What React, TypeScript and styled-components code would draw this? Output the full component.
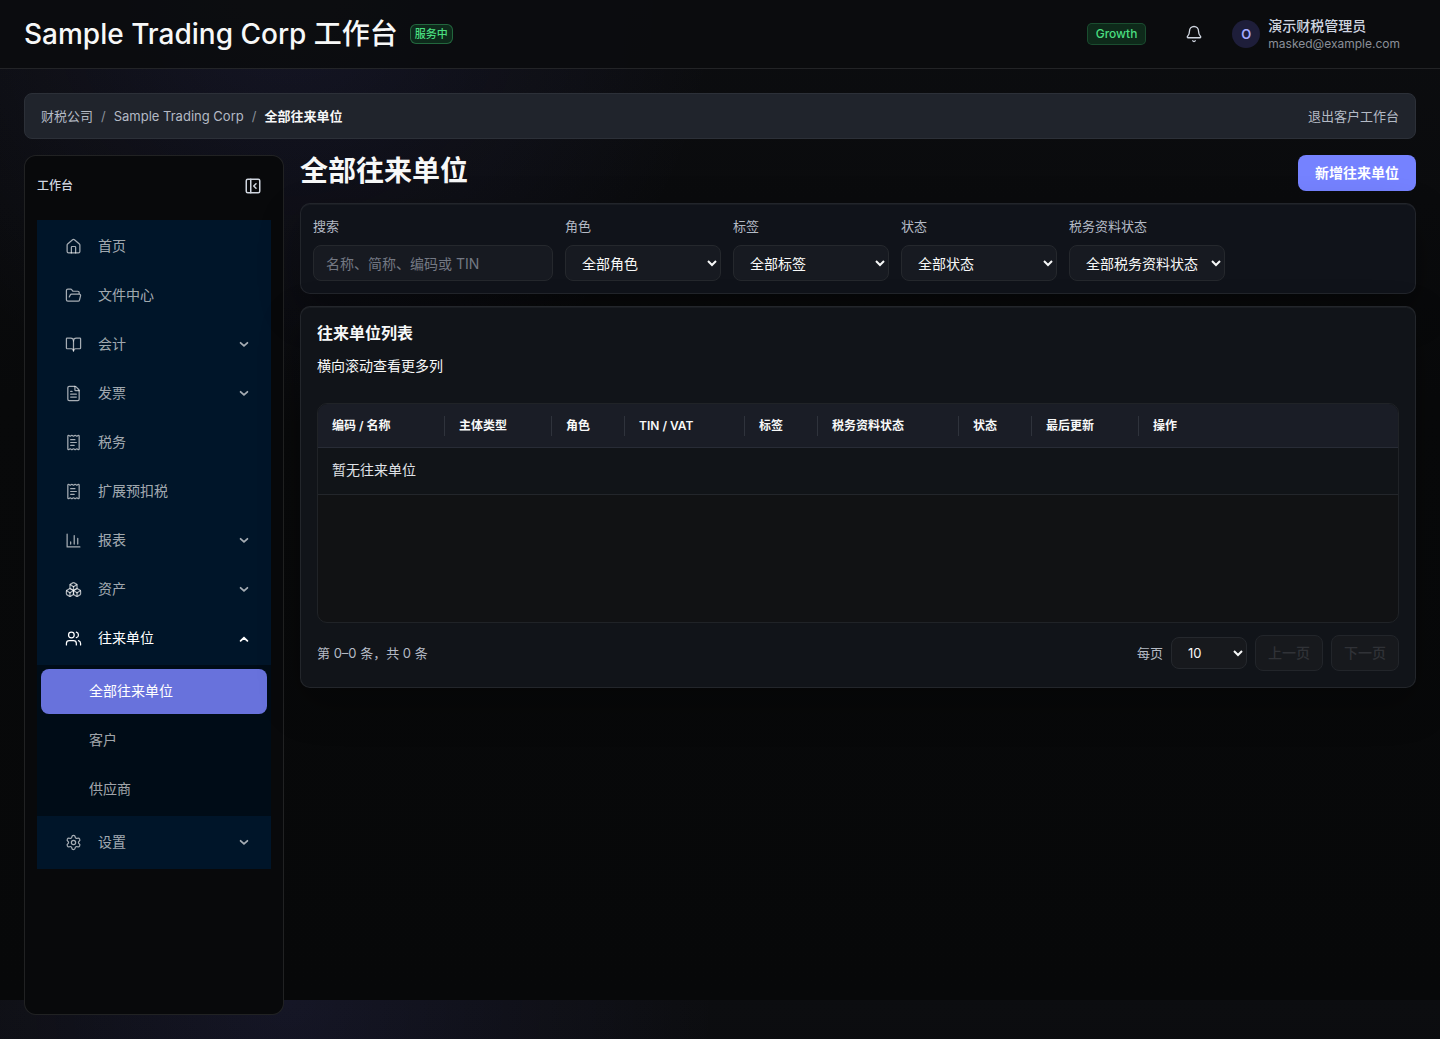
import React from "react";
import styled, { createGlobalStyle, css } from "styled-components";
import {
  Bell,
  BookOpen,
  Boxes,
  FileText,
  FolderOpen,
  House,
  PanelLeftClose,
  ReceiptText,
  Settings,
  Users,
} from "lucide-react";

const GlobalStyle = createGlobalStyle`
  *, *::before, *::after { box-sizing: border-box; }
  html { color-scheme: dark; }
  body {
    margin: 0;
    color: #f7f8f8;
    font: 400 14px/22px Inter, "Noto Sans CJK SC", sans-serif;
    background-color: #08090a;
    background-image:
      radial-gradient(circle at 20% 0%, rgba(113, 112, 255, 0.09), transparent 430px),
      linear-gradient(180deg, #0c0d10 0%, #08090a 40%, #070809 100%);
    background-size: 100% 1000px;
  }
  button, input, select { font: inherit; color: inherit; }
  h1, h2, p { margin: 0; }
  a { color: inherit; text-decoration: none; }
`;

const Shell = styled.div`
  display: flex;
  flex-direction: column;
  min-height: 100vh;
`;

const Header = styled.header`
  display: flex;
  align-items: center;
  justify-content: space-between;
  height: 69px;
  padding: 0 24px;
  background: rgba(11, 12, 14, 0.9);
  border-bottom: 1px solid rgba(255, 255, 255, 0.1);
`;

const Cluster = styled.div<{ $gap: number }>`
  display: flex;
  align-items: center;
  gap: ${(p) => p.$gap}px;
`;

const PageTitle = styled.h1<{ $strong?: boolean }>`
  font-size: 28px;
  line-height: 32px;
  font-weight: ${(p) => (p.$strong ? 600 : 500)};
`;

const Badge = styled.span<{ $large?: boolean }>`
  padding: ${(p) => (p.$large ? "0 8px" : "0 4px")};
  font-size: ${(p) => (p.$large ? 12 : 11)}px;
  line-height: ${(p) => (p.$large ? 20 : 18)}px;
  font-weight: 500;
  color: #4ade80;
  background: rgba(34, 197, 94, 0.16);
  border: 1px solid rgba(74, 222, 128, ${(p) => (p.$large ? 0.2 : 0.34)});
  border-radius: ${(p) => (p.$large ? 5 : 6)}px;
`;

const IconButton = styled.button`
  display: grid;
  place-items: center;
  width: 36px;
  height: 36px;
  padding: 0;
  color: #d0d6e0;
  background: none;
  border: 0;
`;

const UserButton = styled.button`
  display: flex;
  align-items: center;
  gap: 8px;
  margin-left: 4px;
  padding: 0 16px;
  text-align: left;
  background: none;
  border: 0;
`;

const Avatar = styled.span`
  display: grid;
  place-items: center;
  width: 28px;
  height: 28px;
  color: #a5abff;
  font-size: 13px;
  font-weight: 600;
  background: #1e1e3a;
  border-radius: 50%;
`;

const UserText = styled.span`
  display: grid;
`;

const UserName = styled.span`
  line-height: 20px;
  font-weight: 500;
  color: #d0d6e0;
`;

const UserMail = styled.span`
  font-size: 12px;
  line-height: 16px;
  color: #8a8f98;
`;

const Body = styled.div`
  display: flex;
  flex: 1;
  flex-direction: column;
  gap: 16px;
  padding: 24px;
`;

const TopBar = styled.div`
  display: flex;
  align-items: center;
  justify-content: space-between;
  height: 46px;
  padding: 0 16px;
  font-size: 13px;
  color: #b4bac5;
  background: #20242c;
  border: 1px solid #2c3038;
  border-radius: 8px;
`;

const Crumbs = styled.nav`
  display: flex;
  gap: 8px;
`;

const Slash = styled.span`
  color: #8a8f98;
`;

const Current = styled.span`
  font-weight: 600;
  color: #f7f8f8;
`;

const Columns = styled.div`
  display: flex;
  flex: 1;
  gap: 16px;
`;

const Sidebar = styled.aside`
  flex: 0 0 260px;
  padding: 12px;
  background: #08090b;
  border: 1px solid rgba(255, 255, 255, 0.1);
  border-radius: 12px;
`;

const SideHead = styled.div`
  display: flex;
  align-items: center;
  justify-content: space-between;
  height: 36px;
  margin-bottom: 16px;
  font-size: 12px;
  font-weight: 500;
  color: #d0d6e0;
`;

const Menu = styled.nav`
  display: flex;
  flex-direction: column;
  background: #001529;
`;

const MenuGroup = styled.div<{ $nested?: boolean }>`
  display: flex;
  flex-direction: column;
  gap: 4px;
  padding: 4px;
  background: ${(p) => (p.$nested ? "#000c17" : "transparent")};
`;

const itemStyle = css<{ $active?: boolean }>`
  display: flex;
  align-items: center;
  width: 100%;
  height: 45px;
  border: 0;
  border-radius: 8px;
  text-align: left;
  background: none;
  color: ${(p) => (p.$active ? "#ffffff" : "rgba(255, 255, 255, 0.65)")};
`;

const MenuButton = styled.button<{ $active?: boolean }>`
  ${itemStyle}
  gap: 16px;
  padding: 0 18px 1px 24px;
`;

const MenuLink = styled.a`
  ${itemStyle}
  gap: 16px;
  padding: 0 18px 1px 24px;
`;

const SubLink = styled.a<{ $active?: boolean }>`
  ${itemStyle}
  padding: 0 16px 1px 48px;
  ${(p) => p.$active && "background: #6872dc;"}
`;

const MenuText = styled.span`
  flex: 1;
`;

const Content = styled.main`
  display: flex;
  flex: 1;
  flex-direction: column;
  gap: 12px;
  min-width: 0;
`;

const TitleRow = styled.div`
  display: flex;
  justify-content: space-between;
`;

const Button = styled.button<{ $primary?: boolean }>`
  height: 36px;
  padding: 0 ${(p) => (p.$primary ? 17 : 12)}px;
  font-size: 14px;
  font-weight: ${(p) => (p.$primary ? 600 : 500)};
  color: ${(p) => (p.$primary ? "#ffffff" : "#303237")};
  background: ${(p) => (p.$primary ? "#7582ff" : "#17191d")};
  border: ${(p) => (p.$primary ? "0" : "1px solid #22252a")};
  border-radius: 8px;
`;

const Card = styled.section<{ $pad: number; $tone: string }>`
  padding: ${(p) => p.$pad}px;
  background: ${(p) => p.$tone};
  border: 1px solid rgba(255, 255, 255, 0.08);
  border-radius: 10px;
  box-shadow: inset 0 1px 0 rgba(255, 255, 255, 0.04), 0 16px 40px rgba(0, 0, 0, 0.3);
`;

const Filters = styled.form`
  display: flex;
  flex-wrap: wrap;
  gap: 12px;
`;

const Field = styled.label<{ $width: number }>`
  display: grid;
  gap: 8px;
  width: ${(p) => p.$width}px;
  font-size: 13px;
  line-height: 21px;
  color: #b4bac5;
`;

const controlStyle = css`
  width: 100%;
  height: 36px;
  padding: 0 12px;
  font-size: 14px;
  line-height: 20px;
  color: #f7f8f8;
  background: #171a21;
  border: 1px solid #25282d;
  border-radius: 8px;
`;

const TextInput = styled.input`
  ${controlStyle}
  &::placeholder { color: #737883; }
`;

const Select = styled.select<{ $compact?: boolean }>`
  ${controlStyle}
  padding-right: 0;
  ${(p) => p.$compact && "width: 76px; height: 32px; font-size: 13px; background: #17191d;"}
`;

const ListTitle = styled.h2`
  font-size: 16px;
  line-height: 20px;
  font-weight: 600;
`;

const ListNote = styled.p`
  margin: 12px 0 26px;
`;

const TableFrame = styled.div`
  min-height: 220px;
  overflow: auto hidden;
  background: #111214;
  border: 1px solid #202327;
  border-radius: 10px;
`;

const Table = styled.table`
  width: 100%;
  min-width: 920px;
  table-layout: fixed;
  border-collapse: separate;
  border-spacing: 0;
`;

const Th = styled.th<{ $width?: number }>`
  width: ${(p) => (p.$width ? `${p.$width}px` : "auto")};
  height: 44px;
  padding: 0 14px;
  font-size: 12px;
  line-height: 20px;
  font-weight: 600;
  text-align: left;
  background:
    linear-gradient(#2f333c, #2f333c) right 0 center / 1px 20px no-repeat,
    #1a1d26;
  border-bottom: 1px solid #282c36;
  &:last-child { background: #1a1d26; }
`;

const Td = styled.td`
  height: 47px;
  padding: 0 14px 2px;
  color: #e0e3e8;
  background: #111418;
  border-bottom: 1px solid #23262b;
`;

const Footer = styled.div`
  display: flex;
  align-items: center;
  justify-content: space-between;
  margin-top: 12px;
  font-size: 13px;
  color: #b4bac5;
`;

const PageSize = styled.label`
  display: flex;
  align-items: center;
  gap: 8px;
  white-space: nowrap;
`;

function ChartIcon() {
  return (
    <svg width="17" height="17" viewBox="0 0 24 24" fill="none" stroke="currentColor" strokeWidth="1.75" strokeLinecap="round" strokeLinejoin="round" aria-hidden="true">
      <path d="M3 3v18h18M8 17v-3M13 17V5M18 17V9" />
    </svg>
  );
}

function Arrow({ up }: { up?: boolean }) {
  return (
    <svg width="10" height="10" viewBox="0 0 10 10" fill="none" stroke="currentColor" strokeWidth="1.8" strokeLinecap="round" aria-hidden="true">
      <path d={up ? "M1.6 7.8 5 4.8 8.4 7.8" : "M1.6 3.8 5 6.8 8.4 3.8"} />
    </svg>
  );
}

const icon = { size: 17, strokeWidth: 1.75 };

const menu = [
  { label: "首页", icon: <House {...icon} /> },
  { label: "文件中心", icon: <FolderOpen {...icon} /> },
  { label: "会计", icon: <BookOpen {...icon} />, group: true },
  { label: "发票", icon: <FileText {...icon} />, group: true },
  { label: "税务", icon: <ReceiptText {...icon} /> },
  { label: "扩展预扣税", icon: <ReceiptText {...icon} /> },
  { label: "报表", icon: <ChartIcon />, group: true },
  { label: "资产", icon: <Boxes {...icon} />, group: true },
];

const filters = [
  { label: "角色", value: "全部角色" },
  { label: "标签", value: "全部标签" },
  { label: "状态", value: "全部状态" },
  { label: "税务资料状态", value: "全部税务资料状态" },
];

const columns = [
  { label: "编码 / 名称", width: 127 },
  { label: "主体类型", width: 107 },
  { label: "角色", width: 73 },
  { label: "TIN / VAT", width: 120 },
  { label: "标签", width: 73 },
  { label: "税务资料状态", width: 141 },
  { label: "状态", width: 73 },
  { label: "最后更新", width: 107 },
  { label: "操作" },
];

export default function App() {
  return (
    <Shell>
      <GlobalStyle />
      <Header>
        <Cluster $gap={12}>
          <PageTitle>Sample Trading Corp 工作台</PageTitle>
          <Badge>服务中</Badge>
        </Cluster>
        <Cluster $gap={30}>
          <Badge $large>Growth</Badge>
          <Cluster $gap={0}>
            <IconButton type="button" aria-label="通知">
              <Bell size={18} strokeWidth={1.75} />
            </IconButton>
            <UserButton type="button">
              <Avatar>O</Avatar>
              <UserText>
                <UserName>演示财税管理员</UserName>
                <UserMail>masked@example.com</UserMail>
              </UserText>
            </UserButton>
          </Cluster>
        </Cluster>
      </Header>
      <Body>
        <TopBar>
          <Crumbs>
            <a href="#firm">财税公司</a>
            <Slash>/</Slash>
            <a href="#client">Sample Trading Corp</a>
            <Slash>/</Slash>
            <Current>全部往来单位</Current>
          </Crumbs>
          <a href="#exit">退出客户工作台</a>
        </TopBar>
        <Columns>
          <Sidebar>
            <SideHead>
              工作台
              <IconButton type="button" aria-label="收起侧栏">
                <PanelLeftClose size={18} strokeWidth={2} />
              </IconButton>
            </SideHead>
            <Menu>
              <MenuGroup>
                {menu.map((m) =>
                  m.group ? (
                    <MenuButton type="button" key={m.label}>
                      {m.icon}
                      <MenuText>{m.label}</MenuText>
                      <Arrow />
                    </MenuButton>
                  ) : (
                    <MenuLink href="#menu" key={m.label}>
                      {m.icon}
                      <MenuText>{m.label}</MenuText>
                    </MenuLink>
                  ),
                )}
                <MenuButton type="button" $active>
                  <Users {...icon} />
                  <MenuText>往来单位</MenuText>
                  <Arrow up />
                </MenuButton>
              </MenuGroup>
              <MenuGroup $nested>
                <SubLink href="#all" $active>全部往来单位</SubLink>
                <SubLink href="#customers">客户</SubLink>
                <SubLink href="#suppliers">供应商</SubLink>
              </MenuGroup>
              <MenuGroup>
                <MenuButton type="button">
                  <Settings {...icon} />
                  <MenuText>设置</MenuText>
                  <Arrow />
                </MenuButton>
              </MenuGroup>
            </Menu>
          </Sidebar>
          <Content>
            <TitleRow>
              <PageTitle as="h2" $strong>全部往来单位</PageTitle>
              <Button type="button" $primary>新增往来单位</Button>
            </TitleRow>
            <Card $pad={12} $tone="#10131a">
              <Filters>
                <Field $width={240}>
                  搜索
                  <TextInput type="text" placeholder="名称、简称、编码或 TIN" />
                </Field>
                {filters.map((f) => (
                  <Field $width={156} key={f.label}>
                    {f.label}
                    <Select>
                      <option>{f.value}</option>
                    </Select>
                  </Field>
                ))}
              </Filters>
            </Card>
            <Card $pad={16} $tone="#111419">
              <ListTitle>往来单位列表</ListTitle>
              <ListNote>横向滚动查看更多列</ListNote>
              <TableFrame>
                <Table>
                  <thead>
                    <tr>
                      {columns.map((c) => (
                        <Th key={c.label} $width={c.width}>{c.label}</Th>
                      ))}
                    </tr>
                  </thead>
                  <tbody>
                    <tr>
                      <Td colSpan={columns.length}>暂无往来单位</Td>
                    </tr>
                  </tbody>
                </Table>
              </TableFrame>
              <Footer>
                <span>第 0–0 条，共 0 条</span>
                <Cluster $gap={8}>
                  <PageSize>
                    每页
                    <Select $compact>
                      <option>10</option>
                    </Select>
                  </PageSize>
                  <Button type="button" disabled>上一页</Button>
                  <Button type="button" disabled>下一页</Button>
                </Cluster>
              </Footer>
            </Card>
          </Content>
        </Columns>
      </Body>
    </Shell>
  );
}
